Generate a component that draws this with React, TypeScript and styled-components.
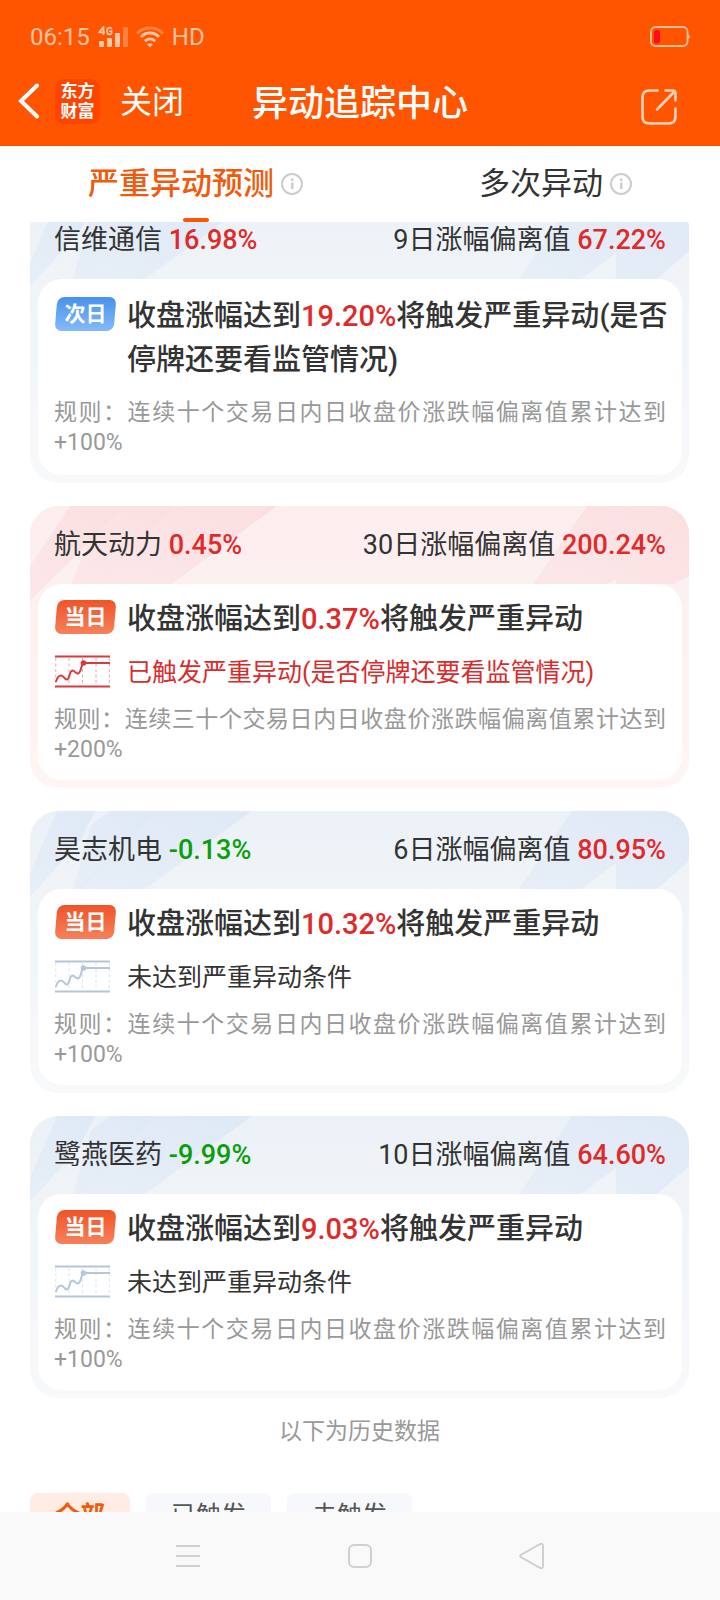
import React from "react";
import styled, { createGlobalStyle, css } from "styled-components";

const GlobalStyle = createGlobalStyle`
  *, *::before, *::after { box-sizing: border-box; }
  body {
    margin: 0;
    background: #fff;
    color: #333;
    font-family: Roboto, "Noto Sans CJK SC", sans-serif;
  }
  button {
    margin: 0;
    padding: 0;
    border: 0;
    background: none;
    color: inherit;
    font: inherit;
    cursor: pointer;
  }
  svg { display: block; flex: none; }
  h1, h2, p { margin: 0; font-weight: 400; }
`;

const Screen = styled.div`
  display: flex;
  flex-direction: column;
  height: 100vh;
  overflow: hidden;
`;

const Header = styled.header`
  flex: none;
  background: #ff5500;
  color: #fff;
  padding-bottom: 18px;
`;

const StatusBar = styled.div`
  display: flex;
  align-items: center;
  justify-content: space-between;
  height: 74px;
  padding: 0 30px;
  color: #ffc5a5;
  font-size: 24px;
`;

const StatusGroup = styled.div`
  display: flex;
  align-items: center;
  gap: 8px;
`;

const NavBar = styled.div`
  display: grid;
  grid-template-columns: 1fr auto 1fr;
  align-items: center;
  height: 54px;
  padding: 0 43px 0 18px;
`;

const NavLeft = styled.div`
  display: flex;
  align-items: center;
`;

const Logo = styled.span`
  display: flex;
  flex-direction: column;
  align-items: center;
  justify-content: center;
  width: 45px;
  height: 45px;
  margin: 0 20px 0 16px;
  border-radius: 9px;
  background: #ff4400;
  font-size: 17px;
  font-weight: 700;
  line-height: 20px;
`;

const CloseButton = styled.button`
  padding-top: 2px;
  font-size: 32px;
  line-height: 44px;
`;

const Title = styled.h1`
  margin-left: 25px;
  padding-top: 6px;
  font-size: 36px;
  font-weight: 500;
  line-height: 48px;
`;

const ShareButton = styled.button`
  justify-self: end;
  align-self: end;
  padding-bottom: 3px;
`;

const Tabs = styled.nav`
  flex: none;
  display: flex;
  justify-content: space-between;
  height: 76px;
  padding: 0 88px;
`;

const Tab = styled.button<{ $active?: boolean }>`
  position: relative;
  display: flex;
  align-items: center;
  gap: 7px;
  font-size: 31px;
  line-height: 44px;
  color: #333;
  ${({ $active }) =>
    $active &&
    css`
      color: #f05a0c;
      font-weight: 500;
      &::after {
        content: "";
        position: absolute;
        left: 50%;
        bottom: 0;
        width: 26px;
        height: 4px;
        margin-left: -13px;
        border-radius: 2px;
        background: #ff5500;
      }
    `}
`;

const ScrollArea = styled.main`
  flex: 1;
  min-height: 0;
  overflow: hidden;
  padding: 0 31px 0 30px;
`;

/* The list rests part-way scrolled, with the first card cut by the tab bar. */
const CardList = styled.div`
  display: flex;
  flex-direction: column;
  gap: 23px;
  margin-top: -21px;
`;

type Tone = "blue" | "red";

const cardFill: Record<Tone, string> = {
  blue: "linear-gradient(#ebf1f7, #f0f4f8 78px, #f8f9fb)",
  red: "linear-gradient(#fdeeee, #fdf0f0 78px, #fff5f4)",
};

const Card = styled.article<{ $tone: Tone }>`
  position: relative;
  padding: 0 7px 8px 8px;
  border-radius: 28px;
  overflow: hidden;
  background: ${({ $tone }) => cardFill[$tone]};
`;

const Streaks = styled.svg<{ $side: "left" | "right" }>`
  position: absolute;
  top: 0;
  ${({ $side }) => $side}: 0;
`;

const CardHead = styled.header`
  position: relative;
  display: flex;
  align-items: center;
  justify-content: space-between;
  height: 78px;
  padding: 0 16px 6px;
  font-size: 27px;
`;

const StockName = styled.h2`
  font-size: 27px;
`;

const Figure = styled.span<{ $down?: boolean }>`
  color: ${({ $down }) => ($down ? "#0a9e0a" : "#e02a2a")};
  font-weight: 500;
`;

const Panel = styled.div<{ $roomy?: boolean }>`
  position: relative;
  display: flex;
  flex-direction: column;
  gap: 16px;
  padding: ${({ $roomy }) => ($roomy ? "15px 16px 17px" : "13px 16px 15px")};
  border-radius: 24px;
  background: #fff;
`;

/* Rows may run into half of the panel's right padding. */
const PanelRow = styled.div`
  display: grid;
  grid-template-columns: 63px 1fr;
  column-gap: 10px;
  margin-right: -8px;
`;

const Badge = styled.span<{ $tone: Tone }>`
  position: relative;
  z-index: 0;
  width: 59px;
  height: 34px;
  margin: 3px 0 0 2px;
  color: #fff;
  font-size: 21px;
  font-weight: 700;
  line-height: 34px;
  text-align: center;
  &::before {
    content: "";
    position: absolute;
    inset: 0;
    z-index: -1;
    border-radius: 7px;
    transform: skewX(-5deg);
    background: ${({ $tone }) =>
      $tone === "blue"
        ? "linear-gradient(#4792e8, #84bafa)"
        : "linear-gradient(#ef5428, #f7805a)"};
  }
`;

const Headline = styled.p`
  font-size: 29px;
  font-weight: 500;
  line-height: 44px;
`;

const TrendCell = styled.span`
  margin-top: -2px;
  padding-left: 1px;
`;

const Condition = styled.p<{ $hit?: boolean }>`
  font-size: 25px;
  line-height: 32px;
  color: ${({ $hit }) => ($hit ? "#d82c2c" : "#333")};
`;

const Rule = styled.p`
  font-size: 23px;
  line-height: 30px;
  color: #999;
  text-align: justify;
`;

const HistoryNote = styled.p`
  padding: 17px 0 0;
  font-size: 23px;
  line-height: 34px;
  color: #999;
  text-align: center;
`;

const Filters = styled.div`
  display: flex;
  gap: 16px;
  margin-top: 44px;
`;

const Chip = styled.button<{ $active?: boolean }>`
  padding: 0 25px;
  border-radius: 8px;
  font-size: 25px;
  line-height: 46px;
  background: ${({ $active }) => ($active ? "#ffede4" : "#f7f8fb")};
  color: ${({ $active }) => ($active ? "#f05a0c" : "#555")};
  font-weight: ${({ $active }) => ($active ? 700 : 400)};
`;

const SystemBar = styled.footer`
  flex: none;
  display: flex;
  align-items: center;
  justify-content: center;
  gap: 146px;
  height: 88px;
  background: #f9f9f9;
`;

const SignalIcon = () => (
  <svg width="30" height="22" viewBox="0 0 30 22" fill="#ffc5a5">
    <g fill="none" stroke="#ffc5a5" strokeWidth="1.8">
      <path d="M5.500 9V1L1 6.400h6" />
      <path d="M13.500 3C13 1.200 9 .8 9 5S13 8.800 13.500 7.500V5.200h-2.300" />
    </g>
    <rect x="1" y="15" width="5" height="6" rx="1" />
    <rect x="9" y="12" width="5" height="9" rx="1" />
    <rect x="17" y="7" width="5" height="14" rx="1" />
    <rect x="25" y="1" width="5" height="20" rx="1" opacity=".4" />
  </svg>
);

const WifiIcon = () => (
  <svg width="28" height="22" viewBox="0 0 28 22" fill="none" stroke="#ffc5a5" strokeWidth="3">
    <path d="M1 7.500C8 .3 20 .3 27 7.500" opacity=".4" />
    <path d="M5 11C10 5.800 18 5.800 23 11" />
    <path d="M8.800 15.200C12 12.200 16 12.200 19.200 15.200" />
    <path d="M11 18.200C13 16.800 15 16.800 17 18.200L14 21.600Z" fill="#ffc5a5" stroke="none" />
  </svg>
);

const BatteryIcon = () => (
  <svg width="40" height="22" viewBox="0 0 40 22" fill="none">
    <rect x="1" y="1" width="36.500" height="19" rx="4.500" stroke="#ffc09a" strokeWidth="1.800" />
    <path d="M38 8.500q2 .5 2 2.300t-2 2.300z" fill="#ffc09a" />
    <rect x="4" y="4" width="6" height="13.500" rx="2.500" fill="#ff0a1e" />
  </svg>
);

const BackIcon = () => (
  <svg width="21" height="36" viewBox="0 0 21 36" fill="none" stroke="#fff" strokeWidth="4" strokeLinecap="round" strokeLinejoin="miter">
    <path d="M19 2.500 3 18 19 33.500" />
  </svg>
);

const ShareIcon = () => (
  <svg width="36" height="36" viewBox="0 0 36 36" fill="none" stroke="#ffd3ba" strokeWidth="2.600" strokeLinecap="round" strokeLinejoin="round">
    <path d="M16.500 1.500H8.500Q1.500 1.500 1.500 8.500V27.500Q1.500 34.500 8.500 34.500H27.500Q34.500 34.500 34.500 27.500V19.500" />
    <path d="M24.500 1.500H31.500Q34.500 1.500 34.500 4.500V11.500M33 3 16 20.500" />
  </svg>
);

const InfoIcon = () => (
  <svg width="22" height="22" viewBox="0 0 22 22" fill="none" stroke="#ccc" strokeWidth="2">
    <circle cx="11" cy="11" r="10" />
    <path d="M11.300 9.500V16" strokeWidth="2.400" />
    <path d="M11.300 5.500V8" strokeWidth="2.400" />
  </svg>
);

const TrendIcon = ({ hit }: { hit?: boolean }) => {
  const color = hit ? "#d83a3f" : "#b4c6da";
  return (
    <svg width="55" height="33" viewBox="0 0 55 33" fill="none" stroke={color}>
      <g strokeWidth="1" strokeDasharray="3 2.500" opacity=".45">
        <path d="M.8 3V30M14 3V30M27.500 3V30M41 3V30M54.300 3V30" />
      </g>
      <path d="M0 1.500H55M0 31.500H55" strokeWidth="2" />
      <path
        d="M.8 27C2 23 4 20.500 6 20.500C9 20.500 9.500 25 12 24.500C15 24 14 16 17.500 15.500C20 15.500 20.500 19 23 18.500C26 17.500 26 11 28 8H55"
        strokeWidth="2"
      />
      <circle cx="28.500" cy="8" r="2.800" fill={color} stroke="none" />
    </svg>
  );
};

const CardStreaks = ({ tone }: { tone: Tone }) => {
  const color = tone === "blue" ? "#dfe9f6" : "#fbdfe1";
  const id = `fade-${tone}`;
  return (
    <>
      <Streaks $side="left" width="260" height="120" viewBox="0 0 260 120" aria-hidden="true">
        <defs>
          <linearGradient id={id} x1="1" y1="0" x2="0" y2="1">
            <stop offset="0" stopColor={color} />
            <stop offset="1" stopColor={color} stopOpacity=".5" />
          </linearGradient>
        </defs>
        <g fill={`url(#${id})`}>
          {tone === "blue" ? (
            <>
              <path d="M27 0H65L50 30 0 86V62Z" />
              <path d="M80 0 61 14 43 78H50L127 0Z" />
              <path d="M127 0H222L115 78H48Z" />
            </>
          ) : (
            <>
              <path d="M40 0H96L0 95V60Z" />
              <path d="M68 14 41 78H69L147 0H96L66 30Z" />
              <path d="M147 0H247L142 78H69Z" />
            </>
          )}
        </g>
      </Streaks>
      <Streaks $side="right" width="180" height="78" viewBox="0 0 180 78" aria-hidden="true">
        <path
          fill={`url(#${id})`}
          d={
            tone === "blue"
              ? "M63 0H180V50L148 78H107V52L72 78H10Z"
              : "M78 0H180V70L164 78H107V73L98 78H24Z"
          }
        />
      </Streaks>
    </>
  );
};

interface Stock {
  name: string;
  change: string;
  days: number;
  deviation: string;
  tone: Tone;
  when: string;
  threshold: string;
  suffix?: string;
  condition?: string;
  hit?: boolean;
  window: string;
  limit: string;
}

const stocks: Stock[] = [
  {
    name: "信维通信", change: "16.98%", days: 9, deviation: "67.22%", tone: "blue",
    when: "次日", threshold: "19.20%", suffix: "(是否停牌还要看监管情况)",
    window: "十", limit: "+100%",
  },
  {
    name: "航天动力", change: "0.45%", days: 30, deviation: "200.24%", tone: "red",
    when: "当日", threshold: "0.37%", condition: "已触发严重异动(是否停牌还要看监管情况)", hit: true,
    window: "三十", limit: "+200%",
  },
  {
    name: "昊志机电", change: "-0.13%", days: 6, deviation: "80.95%", tone: "blue",
    when: "当日", threshold: "10.32%", condition: "未达到严重异动条件",
    window: "十", limit: "+100%",
  },
  {
    name: "鹭燕医药", change: "-9.99%", days: 10, deviation: "64.60%", tone: "blue",
    when: "当日", threshold: "9.03%", condition: "未达到严重异动条件",
    window: "十", limit: "+100%",
  },
];

const StockCard = ({ stock }: { stock: Stock }) => (
  <Card $tone={stock.tone}>
    <CardStreaks tone={stock.tone} />
    <CardHead>
      <StockName>
        {stock.name} <Figure $down={stock.change.startsWith("-")}>{stock.change}</Figure>
      </StockName>
      <span>
        {stock.days}日涨幅偏离值 <Figure>{stock.deviation}</Figure>
      </span>
    </CardHead>
    <Panel $roomy={!stock.condition}>
      <PanelRow>
        <Badge $tone={stock.when === "次日" ? "blue" : "red"}>{stock.when}</Badge>
        <Headline>
          收盘涨幅达到<Figure>{stock.threshold}</Figure>将触发严重异动{stock.suffix}
        </Headline>
      </PanelRow>
      {stock.condition && (
        <PanelRow>
          <TrendCell>
            <TrendIcon hit={stock.hit} />
          </TrendCell>
          <Condition $hit={stock.hit}>{stock.condition}</Condition>
        </PanelRow>
      )}
      <Rule>
        规则：连续{stock.window}个交易日内日收盘价涨跌幅偏离值累计达到{stock.limit}
      </Rule>
    </Panel>
  </Card>
);

export default function App() {
  return (
    <Screen>
      <GlobalStyle />
      <Header>
        <StatusBar>
          <StatusGroup>
            <span>06:15</span>
            <SignalIcon />
            <WifiIcon />
            <span>HD</span>
          </StatusGroup>
          <BatteryIcon />
        </StatusBar>
        <NavBar>
          <NavLeft>
            <button type="button" aria-label="返回">
              <BackIcon />
            </button>
            <Logo>
              <span>东方</span>
              <span>财富</span>
            </Logo>
            <CloseButton type="button">关闭</CloseButton>
          </NavLeft>
          <Title>异动追踪中心</Title>
          <ShareButton type="button" aria-label="分享">
            <ShareIcon />
          </ShareButton>
        </NavBar>
      </Header>
      <Tabs>
        <Tab type="button" $active>
          严重异动预测
          <InfoIcon />
        </Tab>
        <Tab type="button">
          多次异动
          <InfoIcon />
        </Tab>
      </Tabs>
      <ScrollArea>
        <CardList>
          {stocks.map((stock) => (
            <StockCard key={stock.name} stock={stock} />
          ))}
        </CardList>
        <HistoryNote>以下为历史数据</HistoryNote>
        <Filters>
          <Chip type="button" $active>全部</Chip>
          <Chip type="button">已触发</Chip>
          <Chip type="button">未触发</Chip>
        </Filters>
      </ScrollArea>
      <SystemBar>
        <button type="button" aria-label="最近任务">
          <svg width="26" height="26" viewBox="0 0 26 26" stroke="#d0d0d0" strokeWidth="2">
            <path d="M1 3H25M1 13H25M1 23H25" />
          </svg>
        </button>
        <button type="button" aria-label="主屏幕">
          <svg width="26" height="26" viewBox="0 0 26 26" fill="none" stroke="#d0d0d0" strokeWidth="2">
            <rect x="2" y="2" width="22" height="22" rx="5" />
          </svg>
        </button>
        <button type="button" aria-label="后退">
          <svg width="26" height="26" viewBox="0 0 26 26" fill="none" stroke="#d0d0d0" strokeWidth="2" strokeLinejoin="round">
            <path d="M2.500 11.500 21 1.200Q24 0 24 3V23Q24 26 21 24.800L2.500 14.500Q0 13 2.500 11.500Z" />
          </svg>
        </button>
      </SystemBar>
    </Screen>
  );
}
